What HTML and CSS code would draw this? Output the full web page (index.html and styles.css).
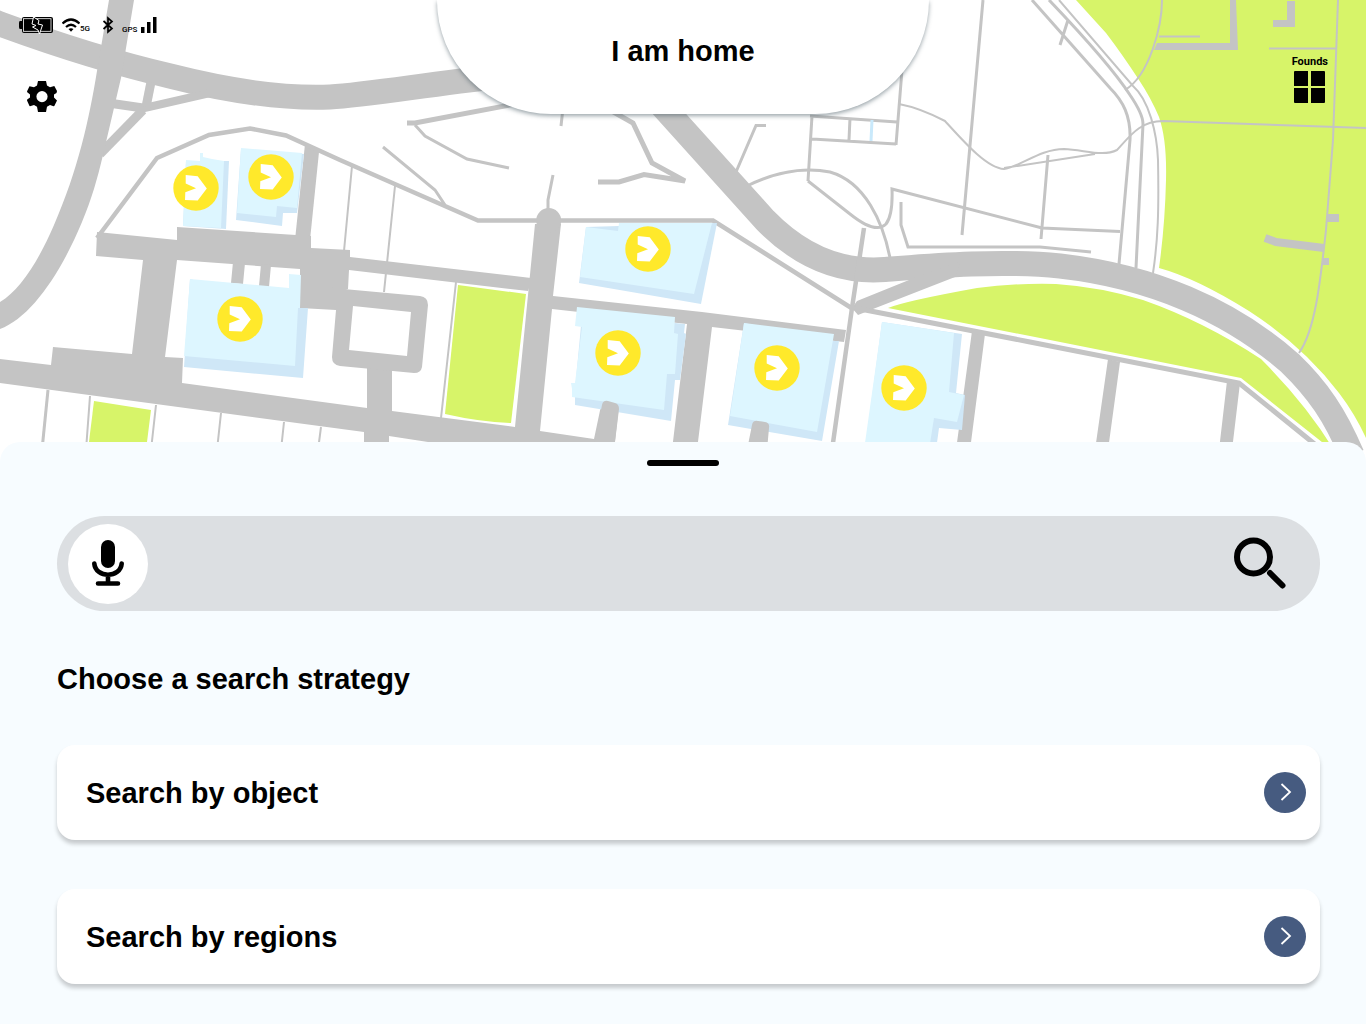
FILE: index.html
```html
<!DOCTYPE html>
<html lang="en">
<head>
<meta charset="utf-8">
<meta name="viewport" content="width=device-width, initial-scale=1">
<title>I am home</title>
<link rel="stylesheet" href="styles.css">
</head>
<body>
<main class="app">
  <section class="map-view">
    <svg class="map" viewBox="0 0 1366 462" preserveAspectRatio="xMidYMin slice" aria-hidden="true">
      <defs>
        <g id="pin">
          <circle r="22.7" fill="#ffe92b"/>
          <path fill="#fff" d="M-10.3-13L1.7-11.8 10.8.4 1.7 12.6-11 12-10.7 4.3 0 .2-10.3-4.5z"/>
        </g>
      </defs>

      <!-- parks -->
      <g class="park">
        <path d="M1076 0L1106 33Q1122 54 1139 80Q1151 98 1159 117Q1167 140 1166 180Q1165 225 1159 268Q1196 278 1249 311Q1303 346 1339 393Q1355 414 1366 438V0z"/>
        <path d="M888 308Q905 301 977 288Q1013 283 1056 284Q1100 287 1143 300Q1203 321 1261 359Q1306 404 1334 450H1332L1241 378 1030 336z"/>
        <path d="M458 285L526 294 511 423Q480 422 445 414z"/>
        <path d="M94 401L151 410 146 450H88z"/>
      </g>

      <!-- wide roads -->
      <g class="road-line">
        <path stroke-width="25" d="M-12 19L0 24C60 46 110 62 170 76C225 90 280 99 330 97C365 95 410 87 500 76"/>
        <path stroke-width="25" d="M655 98L765 220C800 256 840 273 885 269.500C930 266 1000 260 1060 266C1150 276 1230 310 1290 363C1318 390 1335 415 1352 455"/>
        <path stroke-width="9" d="M112 103.500L143 108"/>
        <path stroke-width="8" d="M140 109L210 93"/>
        <path stroke-width="9" d="M151 82L146 107"/>
        <path stroke-width="9" d="M100 154L143 110"/>
      </g>
      <g class="road-area">
        <path d="M109 0L97 71C89 120 78 170 54 225C38 262 20 290 0 302V329C30 318 60 275 82 222C92 198 97 180 103 155L121 78 134 0z"/>
        <path d="M305 144L319 152 310 240H295z"/>
        <path d="M97 232L177 240V227L311 236V248L350 250V257L531 278 528 291 349 270 348 289 300 308V269L177 260 165 357 183 358 182 383 367 408V360H392V411L515 427 535 224H561L553 296 702 312 846 330 844 342 712 327 697 450H672L687 324 552 309 540 431 594 439 602 401 619 405 614 450H480L389 436V450H364V432L0 383V359L51 365 53 347 132 354 143 260 96 256z"/>
        <path fill-rule="evenodd" d="M300 285L420 296Q428 297 428 305L422 367Q421 373 414 373L340 366Q332 365 332 357L336 310 300 308zM353 306L349 350 407 356 411 312z"/>
        <circle cx="548.700" cy="220.500" r="12.500"/>
        <path d="M233 262L245 263 243 284 231 283zM261 264L271 265 269 287 259 286z"/>
        <path d="M857 301L909 280 960 262 955 277 873 309 858 315 852 308z"/>
        <path d="M972 331L985 334 970 450H956zM1108 359L1120 362 1108 450H1095zM1227 381L1240 383 1232 450H1219z"/>
        <path d="M1230 0H1236L1238 50H1154L1157 43H1230zM1287 1H1295V27H1273V20H1287zM1327 214H1339V222H1327zM1322 258H1329V265H1322z"/>
      </g>

      <!-- streets -->
      <g class="road-line">
        <path stroke-width="4.500" d="M97 238L157 158 209 135 250 128.500 286 135.500 340 160 478 220.500H713L853 309"/>
        <path stroke-width="4.500" d="M864 228L852 308 832 450"/>
        <path stroke-width="5" d="M855 308L1030 342 1239 383 1322 450"/>
        <path stroke-width="8" d="M1265 238L1276 242 1324 248"/>
        <path stroke-width="5" d="M407 123H415L515 104M598 182H619L644 174.500 685 181 652 163 633 123 610 110"/>
        <path stroke-width="3" d="M415 125L425 136 467 159 509 168M383 147L435 190 445 205M561 126L563 108M553 175L548 200V212M736 172L756 125.500H766"/>
        <path stroke-width="3" d="M812 116L808 181M810 116L897 122M812 139L896 144M902 70L896 145M850 118L849 140M983 0L962 235M1048 155L1041 239"/>
        <path stroke-width="3" d="M747 186C785 167 815 169 830 172C865 182 883 222 890 258M808 181L850 214C870 230 880 230 886 224Q893 215 892 189L1042 228 1120 231.500M901 202V225L908 247H1040L1091 252"/>
        <path stroke-width="3" d="M1032 0L1110 88C1123 101 1131 116 1130 140L1119 264M1049 0Q1110 64 1130 95Q1143 114 1143 124L1136 268M1068 20L1060 45"/>
        <path stroke-width="2" d="M1059 0L1133 86C1149 100 1157 133 1158 160C1159 210 1158 240 1153 273M1162 0C1162 25 1150 75 1125 90M1159 36.500H1200M1269 48.500H1337M1338 0L1333 140 1326 230C1320 285 1315 330 1299 353"/>
        <path stroke-width="2" d="M899 104Q920 108 945 121C965 143 987 168 1004 169C1020 167 1040 149 1064 149C1085 150 1103 157 1117 150C1130 136 1140 121 1163 121L1366 128M1004 168L1095 154"/>
        <path stroke-width="2" d="M352 166L344 251M395 186L384 292M456 282L441 418M90 396L86 450M156 405L151 450M221 413L217 450M284 422L281 450M321 427L318 450"/>
        <path stroke-width="3" d="M48 390L42 450"/>
        <path stroke="#c9e9fb" stroke-width="3" d="M872 120L871 141"/>
      </g>

      <!-- buildings: shaded side first, roof over it -->
      <g class="building-side">
        <path d="M186 161L229 161 226 229 183 226z"/>
        <path d="M241 149L304 154 297 213H283L282 226 236 220z"/>
        <path d="M190 279L297 308H308L303 378 184 367z"/>
        <path d="M586 227L717 223 701 304 579 283z"/>
        <path d="M582 315L675 323 685 324 684 333 686 334 680 380H675L671 421 575 405V390z"/>
        <path d="M744 323L834 341H839L822 441 728 425z"/>
        <path d="M882 322L962 334 956 393 965 395 962 430 939 428 936 450H865z"/>
      </g>
      <g class="building-roof">
        <path d="M186 160L200 161V153H203V157L212 159 224 161 221 228 183 226z"/>
        <path d="M241 148L302 153 297 208 277 206 276 217 237 213z"/>
        <path d="M190 279L289 288V274L301 275 300 308 298 308 295 366 184 356z"/>
        <path d="M586 227L618 231 619 223H712L694 294 580 277z"/>
        <path d="M577 307L675 317 674 333 678 334 675 374H667L664 410 572 397V389L571 383H575L582 327 575 326z"/>
        <path d="M744 323L834 334 817 432 730 416z"/>
        <path d="M882 322L954 333 949 392 964 395 957 422 934 418 929 450H864z"/>
      </g>
      <path class="road-area" d="M602 405Q603 400 608 401L615 403Q619 404 619 409L614 450H593zM752 425Q753 420 758 421L765 422Q770 423 769 428L767 450H747z"/>

      <use href="#pin" x="196" y="188"/>
      <use href="#pin" x="271" y="177"/>
      <use href="#pin" x="240" y="319"/>
      <use href="#pin" x="648" y="249"/>
      <use href="#pin" x="618" y="353"/>
      <use href="#pin" x="777" y="368"/>
      <use href="#pin" x="904" y="388"/>
    </svg>

    <header class="topbar">
      <div class="topbar-left">
        <div class="status">
          <svg width="36" height="20" viewBox="0 0 36 20" aria-hidden="true">
            <rect x="4" y="2" width="31" height="16" rx="2"/>
            <path d="M4 6H2Q1 6 1 8V12Q1 14 2 14H4z"/>
            <rect x="5.500" y="3.700" width="27.500" height="12.600" fill="none" stroke="#fff" stroke-width=".8"/>
            <path d="M15.500 2L21 5.500 20 9 24.500 10 21.500 19 20 15 14.500 12 18 10.500 14 9z" stroke="#fff" stroke-width="1"/>
          </svg>
          <span class="status-item">
            <svg width="18" height="16" viewBox="1 0 18 16" aria-hidden="true">
              <path d="M1.500 6.500Q10-1.500 18.500 6.500M5 10Q10 5.500 15 10" fill="none" stroke="#000" stroke-width="2.200"/>
              <path d="M7.500 12Q10 10.500 12.500 12L10 14.800z"/>
            </svg>
            <span class="status-text">5G</span>
          </span>
          <svg width="12" height="18" viewBox="0 0 12 18" aria-hidden="true">
            <path d="M1.500 5L10 12.500 6 16V2L10 5.500 1.500 13" fill="none" stroke="#000" stroke-width="1.700"/>
          </svg>
          <span class="status-item">
            <span class="status-text">GPS</span>
            <svg width="20" height="18" viewBox="0 0 20 18" aria-hidden="true">
              <path d="M4 11H7.500V17H4zM10 6H13.500V17H10zM16 1H19.500V17H16z"/>
            </svg>
          </span>
        </div>
        <button class="icon-button" type="button" aria-label="Settings">
          <svg width="32" height="32" viewBox="0 0 32 32" aria-hidden="true">
            <path fill-rule="evenodd" d="M12 1H20L21 5.500 24 7.300 28.300 6 31 11 30.500 13 28 14.500V17.500L31 20.500 28.300 26 27.500 26.200 24 25 21 26.800 20 32H12L11 26.800 8 25 4 26.200 3.500 26 1 20.500 1.200 19.500 4 17.500V14.500L1 12 1.200 11 3.500 6.200 8 7.300 11 5.500zM16 11a5.600 5.600 0 1 0 0 11.200a5.600 5.600 0 1 0 0-11.200z"/>
          </svg>
        </button>
      </div>
      <h1 class="title">I am home</h1>
      <div class="topbar-right">
        <button class="founds" type="button">
          <span>Founds</span>
          <svg width="32" height="32" viewBox="0 0 32 32" aria-hidden="true">
            <path d="M0 1Q0 0 1 0H14V15H0zM17 0H30Q31 0 31 1V15H17zM0 17H14V32H1Q0 32 0 31zM17 17H31V31Q31 32 30 32H17z"/>
          </svg>
        </button>
      </div>
    </header>
  </section>

  <section class="sheet">
    <button class="handle" type="button" aria-label="Resize panel"></button>
    <form class="search" role="search">
      <button class="mic" type="button" aria-label="Voice search">
        <svg width="34" height="48" viewBox="0 0 34 48" aria-hidden="true">
          <rect x="10" y="0" width="14" height="28" rx="7"/>
          <path d="M3.300 23.500C4.500 38.500 29.500 38.500 30.700 23.500M17 36V43M7 43.500H27" fill="none" stroke="#000" stroke-width="4.600" stroke-linecap="round"/>
        </svg>
      </button>
      <input class="search-input" type="search" name="q" aria-label="Search">
      <button class="icon-button" type="submit" aria-label="Search">
        <svg width="52" height="54" viewBox="0 0 52 54" aria-hidden="true">
          <circle cx="19.500" cy="20" r="16.500" fill="none" stroke="#000" stroke-width="6"/>
          <path d="M36 36L48.500 48.500" stroke="#000" stroke-width="6" stroke-linecap="round"/>
        </svg>
      </button>
    </form>
    <h2 class="heading">Choose a search strategy</h2>
    <nav class="options" aria-label="Search strategies">
      <a class="option" href="#object">
        <span>Search by object</span>
        <svg width="42" height="42" viewBox="0 0 42 42" aria-hidden="true">
          <ellipse cx="21" cy="20.500" rx="21" ry="20.500" fill="#465b80"/>
          <path d="M17.500 12L26 20 17.500 28" fill="none" stroke="#fff" stroke-width="1.800"/>
        </svg>
      </a>
      <a class="option" href="#regions">
        <span>Search by regions</span>
        <svg width="42" height="42" viewBox="0 0 42 42" aria-hidden="true">
          <ellipse cx="21" cy="20.500" rx="21" ry="20.500" fill="#465b80"/>
          <path d="M17.500 12L26 20 17.500 28" fill="none" stroke="#fff" stroke-width="1.800"/>
        </svg>
      </a>
    </nav>
  </section>
</main>
</body>
</html>
```
FILE: styles.css
```css
* {
  box-sizing: border-box;
}

body {
  margin: 0;
  color: #000;
  background: #f7fcff;
  font-family: "Liberation Sans", Arial, sans-serif;
}

button {
  padding: 0;
  border: 0;
  color: inherit;
  background: none;
  font: inherit;
  cursor: pointer;
}

svg {
  display: block;
}

.app {
  display: flex;
  flex-direction: column;
  min-height: 100vh;
}

/* Map */
.map-view {
  position: relative;
  min-height: 442px;
  background: #fff;
}

.map {
  position: absolute;
  top: 0;
  left: 0;
  width: 100%;
  height: calc(100% + 20px);
  background: #fff;
}

.park {
  fill: #d7f469;
}

.road-area {
  fill: #c4c4c4;
}

.road-line {
  fill: none;
  stroke: #c4c4c4;
}

.building-side {
  fill: #cfe7f7;
}

.building-roof {
  fill: #ddf6ff;
}

/* Top bar */
.topbar {
  position: relative;
  display: grid;
  grid-template-columns: 1fr minmax(200px, 492px) 1fr;
  align-items: start;
}

.topbar-left {
  display: flex;
  flex-direction: column;
  align-items: flex-start;
  gap: 45px;
  padding: 15px 18px;
}

.topbar-left .icon-button {
  margin-left: 8px;
}

.status {
  display: flex;
  align-items: center;
  gap: 8px;
}

.status-item {
  display: flex;
  align-items: flex-end;
}

.status-item + svg {
  margin-left: 4px;
}

.status-text {
  font: 500 8px/8px Roboto, sans-serif;
}

.title {
  height: 114px;
  margin: 0;
  padding-top: 33px;
  border-radius: 0 0 115px 115px;
  background: #fff;
  box-shadow: 0 2px 4px rgba(60, 80, 90, 0.5);
  font-size: 29px;
  line-height: 36px;
  text-align: center;
}

.topbar-right {
  display: flex;
  justify-content: flex-end;
  padding: 56px 38px 0 0;
}

.founds {
  display: flex;
  flex-direction: column;
  align-items: center;
  gap: 3px;
  font: 700 11px/12px Roboto, sans-serif;
}

/* Bottom sheet */
.sheet {
  position: relative;
  flex: 1;
  display: flex;
  flex-direction: column;
  padding: 18px 46px 40px 57px;
  border-radius: 20px 20px 0 0;
  background: #f7fcff;
}

.handle {
  align-self: center;
  width: 72px;
  height: 6px;
  margin-right: 11px;
  border-radius: 3px;
  background: #000;
}

.search {
  display: flex;
  align-items: center;
  height: 95px;
  margin-top: 50px;
  padding: 0 34px 0 11px;
  border-radius: 48px;
  background: #dcdfe2;
}

.mic {
  display: grid;
  flex: none;
  place-items: center;
  width: 80px;
  height: 80px;
  border-radius: 50%;
  background: #fff;
}

.search-input {
  flex: 1;
  min-width: 0;
  height: 100%;
  padding: 0 24px;
  border: 0;
  outline: 0;
  background: transparent;
  font: inherit;
  font-size: 29px;
}

.heading {
  margin: 50px 0 0;
  font-size: 29px;
  line-height: 36px;
}

.options {
  display: grid;
  gap: 49px;
  margin-top: 48px;
}

.option {
  display: flex;
  align-items: center;
  justify-content: space-between;
  height: 95px;
  padding: 0 14px 0 29px;
  border-radius: 18px;
  color: inherit;
  background: #fff;
  box-shadow: 0 4px 4px rgba(0, 0, 0, 0.2);
  font-size: 29px;
  font-weight: 700;
  line-height: 36px;
  text-decoration: none;
}
```
